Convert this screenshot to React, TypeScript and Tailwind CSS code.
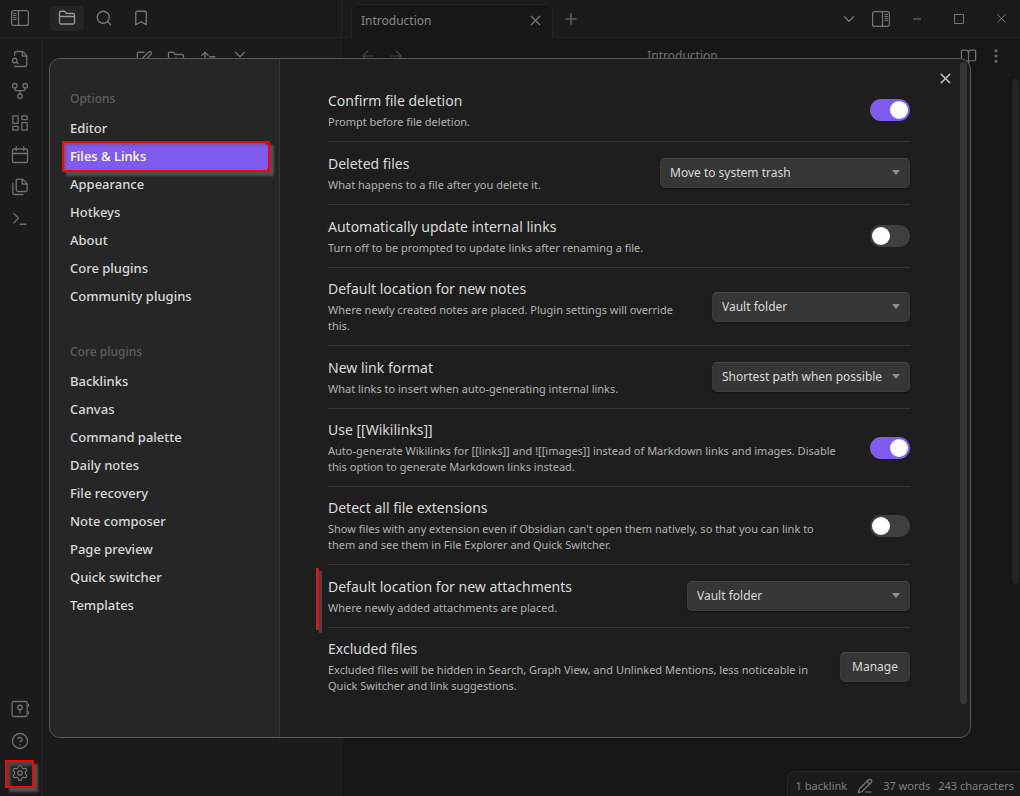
import type { ReactNode } from "react"
import {
  ArrowLeft,
  ArrowRight,
  Bookmark,
  BookOpen,
  ChevronDown,
  CircleQuestionMark,
  EllipsisVertical,
  FolderClosed,
  FolderPlus,
  Minus,
  PencilLine,
  Plus,
  Search,
  Settings,
  SquarePen,
  Terminal,
  X,
} from "lucide-react"

type Setting = {
  id: string
  name: string
  description: string
  control: "toggle" | "select" | "button"
  checked?: boolean
  value?: string
  width?: string
  marked?: boolean
}

const options = ["Editor", "Files & Links", "Appearance", "Hotkeys", "About", "Core plugins", "Community plugins"]

const corePlugins = [
  "Backlinks",
  "Canvas",
  "Command palette",
  "Daily notes",
  "File recovery",
  "Note composer",
  "Page preview",
  "Quick switcher",
  "Templates",
]

const settings: Setting[] = [
  {
    id: "confirm-deletion",
    name: "Confirm file deletion",
    description: "Prompt before file deletion.",
    control: "toggle",
    checked: true,
  },
  {
    id: "deleted-files",
    name: "Deleted files",
    description: "What happens to a file after you delete it.",
    control: "select",
    value: "Move to system trash",
    width: "w-[250px]",
  },
  {
    id: "update-links",
    name: "Automatically update internal links",
    description: "Turn off to be prompted to update links after renaming a file.",
    control: "toggle",
    checked: false,
  },
  {
    id: "new-notes",
    name: "Default location for new notes",
    description: "Where newly created notes are placed. Plugin settings will override\nthis.",
    control: "select",
    value: "Vault folder",
    width: "w-[198px]",
  },
  {
    id: "link-format",
    name: "New link format",
    description: "What links to insert when auto-generating internal links.",
    control: "select",
    value: "Shortest path when possible",
    width: "w-[198px]",
  },
  {
    id: "wikilinks",
    name: "Use [[Wikilinks]]",
    description:
      "Auto-generate Wikilinks for [[links]] and ![[images]] instead of Markdown links and images. Disable\nthis option to generate Markdown links instead.",
    control: "toggle",
    checked: true,
  },
  {
    id: "detect-extensions",
    name: "Detect all file extensions",
    description:
      "Show files with any extension even if Obsidian can't open them natively, so that you can link to\nthem and see them in File Explorer and Quick Switcher.",
    control: "toggle",
    checked: false,
  },
  {
    id: "new-attachments",
    name: "Default location for new attachments",
    description: "Where newly added attachments are placed.",
    control: "select",
    value: "Vault folder",
    width: "w-[223px]",
    marked: true,
  },
  {
    id: "excluded-files",
    name: "Excluded files",
    description:
      "Excluded files will be hidden in Search, Graph View, and Unlinked Mentions, less noticeable in\nQuick Switcher and link suggestions.",
    control: "button",
    value: "Manage",
  },
]

function Glyph({ children, className = "" }: { children: ReactNode; className?: string }) {
  return (
    <svg
      width="18"
      height="18"
      viewBox="0 0 24 24"
      fill="none"
      stroke="currentColor"
      strokeWidth="1.75"
      strokeLinecap="round"
      strokeLinejoin="round"
      className={className}
    >
      {children}
    </svg>
  )
}

function SidebarIcon({ className = "" }: { className?: string }) {
  return (
    <svg width="18" height="16" viewBox="0 0 18 16" fill="none" stroke="currentColor" className={className}>
      <rect x="0.6" y="0.6" width="16.8" height="14.8" rx="2" strokeWidth="1.2" />
      <path d="M7.5 1v14" strokeWidth="1.2" />
      <path d="M2 3.5h3.5M2 5.5h3.5M2 7.5h3.5M2 9.5h3.5" />
    </svg>
  )
}

function IconButton({ label, children, className = "" }: { label: string; children: ReactNode; className?: string }) {
  return (
    <button aria-label={label} className={`flex shrink-0 items-center justify-center ${className}`}>
      {children}
    </button>
  )
}

function Ribbon() {
  const line = { size: 18, strokeWidth: 1.75 }
  return (
    <nav className="flex w-[42px] shrink-0 flex-col items-center border-r border-[#242424] pt-[5px] pb-[7px] pr-px">
      <IconButton label="Open quick switcher" className="h-8 w-8">
        <Glyph>
          <path d="M5 7V4a2 2 0 0 1 2-2h8.5L21 7.5V20a2 2 0 0 1-2 2H5" />
          <path d="M15 2v6h6" />
          <circle cx="5" cy="14" r="3" />
          <path d="m7.5 16.5 2 2" />
        </Glyph>
      </IconButton>
      <IconButton label="Open graph view" className="h-8 w-8">
        <Glyph>
          <circle cx="5" cy="5" r="3" />
          <circle cx="19" cy="5" r="3" />
          <circle cx="12" cy="19" r="3" />
          <path d="M5 8v1.5a2 2 0 0 0 2 2h10a2 2 0 0 0 2-2V8M12 11.5V16" />
        </Glyph>
      </IconButton>
      <IconButton label="Create new canvas" className="h-8 w-8">
        <Glyph>
          <path d="M2.5 2.5h7v10h-7zM14.5 2.5h7v5h-7zM14.5 11.5h7v10h-7zM2.5 16.5h7v5h-7z" />
        </Glyph>
      </IconButton>
      <IconButton label="Open today's daily note" className="h-8 w-8">
        <Glyph>
          <rect x="2" y="4" width="20" height="18" rx="2" />
          <path d="M7 1v5M17 1v5M2 10h20" />
        </Glyph>
      </IconButton>
      <IconButton label="Insert template" className="h-8 w-8">
        <Glyph>
          <path d="M15.5 1.5H9a2 2 0 0 0-2 2V16a2 2 0 0 0 2 2h10.5a2 2 0 0 0 2-2V7.5z" />
          <path d="M15 1.5V8h6.5M2.5 7v13a2 2 0 0 0 2 2H16" />
        </Glyph>
      </IconButton>
      <IconButton label="Open command palette" className="h-8 w-8"><Terminal {...line} /></IconButton>
      <div className="mt-auto flex flex-col">
        <IconButton label="Open another vault" className="h-8 w-8">
          <Glyph>
            <rect x="1.5" y="2" width="20" height="20" rx="2" />
            <circle cx="12" cy="10" r="3" />
            <path d="M12 13v4M23.5 6v2M23.5 16v2" />
          </Glyph>
        </IconButton>
        <IconButton label="Help" className="h-8 w-8"><CircleQuestionMark {...line} /></IconButton>
        <div className="relative">
          <IconButton label="Settings" className="h-8 w-8"><Settings {...line} /></IconButton>
          <div className="pointer-events-none absolute left-px right-[2px] top-[3px] h-7 border-2 border-[#fe0000] shadow-[4px_4px_2px_#505050,inset_4px_4px_3px_#484848]" />
        </div>
      </div>
    </nav>
  )
}

function TitleBar() {
  return (
    <header className="flex h-[38px] shrink-0 text-[#777]">
      <div className="flex w-[342px] items-center border-b border-r border-[#242424] pb-px">
        <IconButton label="Collapse sidebar" className="ml-[11px]"><SidebarIcon /></IconButton>
        <IconButton label="Files" className="ml-[21px] h-[25px] w-[34px] rounded bg-[#252525] text-[#999]">
          <FolderClosed size={18} strokeWidth={1.75} />
        </IconButton>
        <IconButton label="Search" className="ml-[3px] w-[34px]"><Search size={18} strokeWidth={1.75} /></IconButton>
        <IconButton label="Bookmarks" className="ml-[3px] w-[34px]"><Bookmark size={18} strokeWidth={1.75} /></IconButton>
      </div>
      <div className="w-[9px] rounded-br-md border-b border-[#242424]" />
      <div className="mt-1 flex w-[202px] items-center rounded-t-md border-x border-t border-[#242424] bg-[#171717] pl-[9px] pr-2 pb-[2px] text-[12px]">
        <span className="flex-1 text-[#8a8a8a]">Introduction</span>
        <IconButton label="Close tab"><X size={17} strokeWidth={1.75} /></IconButton>
      </div>
      <div className="flex flex-1 items-center rounded-bl-md border-b border-[#242424] pl-[9px] pr-[10px]">
        <IconButton label="New tab"><Plus size={18} strokeWidth={1.5} /></IconButton>
        <IconButton label="Tab list" className="ml-auto"><ChevronDown size={18} strokeWidth={1.75} /></IconButton>
        <IconButton label="Expand sidebar" className="ml-[14px]"><SidebarIcon className="-scale-x-100" /></IconButton>
        <IconButton label="Minimize" className="ml-[18px] w-[18px]"><Minus size={12} strokeWidth={2} /></IconButton>
        <IconButton label="Maximize" className="ml-6 w-[18px]">
          <svg width="10" height="10" viewBox="0 0 10 10" fill="none" stroke="currentColor">
            <path d="M.5.5h9v9h-9z" />
          </svg>
        </IconButton>
        <IconButton label="Close window" className="ml-6 w-[18px]"><X size={15} strokeWidth={1.5} /></IconButton>
      </div>
    </header>
  )
}

function Workspace() {
  return (
    <div className="flex h-screen flex-col bg-[#1b1b1b] text-[#707070]">
      <TitleBar />
      <div className="flex min-h-0 flex-1">
        <Ribbon />
        <aside className="w-[300px] shrink-0 border-r border-[#242424]">
          <div className="flex justify-center gap-[14px] pt-3">
            <SquarePen size={18} strokeWidth={1.75} />
            <FolderPlus size={18} strokeWidth={1.75} />
            <Glyph>
              <path d="M8 20V3M4 7l4-4 4 4M14 9h7M14 14h4" />
            </Glyph>
            <Glyph>
              <path d="m6 3 6 6 6-6M6 21l6-6 6 6" />
            </Glyph>
          </div>
        </aside>
        <main className="relative flex-1 bg-[#171717]">
          <div className="flex items-center pl-[17px] pr-[15px] pt-[9px] text-[12px]">
            <ArrowLeft size={18} strokeWidth={1.5} className="text-[#444]" />
            <ArrowRight size={18} strokeWidth={1.5} className="ml-[10px] text-[#444]" />
            <span className="flex-1 text-center">Introduction</span>
            <BookOpen size={17} strokeWidth={1.75} />
            <EllipsisVertical size={18} strokeWidth={2} className="ml-[10px]" />
          </div>
          <div className="absolute right-px top-[41px] h-[505px] w-[7px] rounded-full bg-[#242424]" />
          <footer className="absolute bottom-0 right-0 flex h-[25px] items-center rounded-tl-lg border-l border-t border-[#282828] bg-[#1b1b1b] pl-2 pr-[6px] pt-1 text-[11px] text-[#808080]">
            <span>1 backlink</span>
            <PencilLine size={16} strokeWidth={1.75} className="ml-[10px]" />
            <span className="ml-[10px]">37 words</span>
            <span className="ml-2">243 characters</span>
          </footer>
        </main>
      </div>
    </div>
  )
}

function NavGroup({ title, items, active }: { title: string; items: string[]; active?: string }) {
  return (
    <div>
      <h2 className="mb-2 px-2 text-[12px] leading-4 text-[#5f5f5f]">{title}</h2>
      <ul>
        {items.map((item) => (
          <li key={item} className="relative">
            <button
              className={`block h-7 w-full rounded px-2 text-left ${
                item === active ? "bg-[#7f5bee] text-white" : "text-[#dadada]"
              }`}
            >
              {item}
            </button>
            {item === active && (
              <div className="pointer-events-none absolute -right-[2px] -bottom-px -top-[2px] left-0 border-2 border-[#fe0000] shadow-[4px_4px_2px_#505050,inset_2px_2px_3px_#50505080]" />
            )}
          </li>
        ))}
      </ul>
    </div>
  )
}

function Control({ setting }: { setting: Setting }) {
  if (setting.control === "toggle") {
    return (
      <input
        id={setting.id}
        type="checkbox"
        defaultChecked={setting.checked}
        className="h-[22px] w-10 shrink-0 appearance-none rounded-full bg-[#3f3f3f] p-[2px] before:block before:size-[18px] before:rounded-full before:bg-white checked:bg-[#7f5bee] checked:before:translate-x-[18px]"
      />
    )
  }
  if (setting.control === "select") {
    return (
      <div className={`relative shrink-0 ${setting.width}`}>
        <select
          id={setting.id}
          className="block h-[30px] w-full appearance-none rounded-[5px] border border-[#3d3d3d] border-t-[#484848] bg-[#363636] pl-[9px] pr-4 text-[12px] text-[#dadada] shadow-[0_1px_2px_#0006]"
        >
          <option>{setting.value}</option>
        </select>
        <svg viewBox="0 0 8 5" className="pointer-events-none absolute right-[10px] top-[12px] h-[5px] w-2 fill-[#8c8c8c]">
          <path d="M0 0h8L4 5z" />
        </svg>
      </div>
    )
  }
  return (
    <button
      id={setting.id}
      className="h-[30px] shrink-0 rounded-[5px] border border-[#3d3d3d] border-t-[#484848] bg-[#363636] px-[11px] text-[12px] text-[#dadada] shadow-[0_1px_2px_#0006]"
    >
      {setting.value}
    </button>
  )
}

function SettingsDialog() {
  return (
    <div
      role="dialog"
      aria-label="Settings"
      className="relative flex h-full w-full overflow-hidden rounded-[11px] border border-[#595959] bg-[#1e1e1e] text-[13px] text-[#dadada]"
    >
      <nav className="flex w-[230px] shrink-0 flex-col gap-[33px] border-r border-[#363636] bg-[#262626] pl-3 pr-[11px] pt-8 font-medium">
        <NavGroup title="Options" items={options} active="Files & Links" />
        <NavGroup title="Core plugins" items={corePlugins} />
      </nav>
      <div className="min-w-0 flex-1 overflow-hidden pl-12 pr-[60px] pt-5">
        {settings.map((setting) => (
          <div
            key={setting.id}
            className="relative flex min-h-[63px] items-center justify-between gap-3 border-b border-[#363636] py-[11px] last:border-b-0"
          >
            <div className="min-w-0">
              <label htmlFor={setting.id} className="block text-[14px] leading-[19px]">{setting.name}</label>
              <p className="mt-1 whitespace-pre-line text-[11px] leading-4 text-[#b3b3b3]">{setting.description}</p>
            </div>
            <Control setting={setting} />
            {setting.marked && (
              <div className="absolute -left-3 bottom-[-3px] top-[3px] w-[3px] bg-[#dd1515] shadow-[3px_3px_1px_#454545]" />
            )}
          </div>
        ))}
      </div>
      <div className="absolute right-[3px] top-[3px] h-[642px] w-[7px] rounded-full bg-[#363636]" />
      <IconButton label="Close settings" className="absolute right-4 top-[11px] text-[#c8c8c8]">
        <X size={17} strokeWidth={2} />
      </IconButton>
    </div>
  )
}

export default function App() {
  return (
    <div className="relative h-screen overflow-hidden font-['Noto_Sans',sans-serif]">
      <Workspace />
      <div className="absolute inset-0 px-[49px] py-[58px]">
        <SettingsDialog />
      </div>
    </div>
  )
}
